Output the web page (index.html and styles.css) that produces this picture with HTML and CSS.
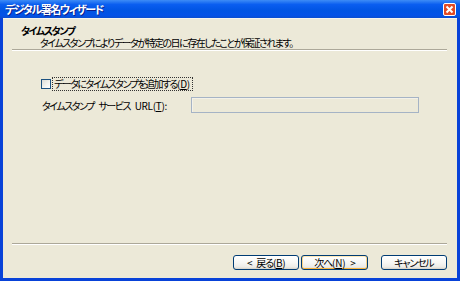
FILE: index.html
```html
<!DOCTYPE html>
<html lang="ja">
<head>
    <meta charset="UTF-8">
    <title>デジタル署名ウィザード</title>
    <link rel="stylesheet" href="styles.css">
</head>
<body>
    <div class="window">
        <div class="titlebar">
            <span class="title">デジタル署名ウィザード</span>
            <span class="close-btn">
                <svg width="9" height="9" viewBox="0 0 9 9">
                    <path d="M1.5 1.5 L7.5 7.5 M7.5 1.5 L1.5 7.5" stroke="#fff" stroke-width="2"/>
                </svg>
            </span>
        </div>

        <div class="client">
            <div class="header">
                <div class="header-title">タイムスタンプ</div>
                <div class="header-desc">タイムスタンプによりデータが特定の日に存在したことが保証されます。</div>
            </div>
            <div class="separator"></div>

            <div class="content">
                <label class="check-row">
                    <span class="checkbox"></span>
                    <span class="check-text">データにタイムスタンプを追加する<span class="latin">(<u>D</u>)</span></span>
                </label>
                <div class="url-row">
                    <span class="url-label">タイムスタンプ サービス <span class="latin">URL(<u>T</u>):</span></span>
                    <span class="textbox"></span>
                </div>
            </div>

            <div class="separator"></div>

            <div class="buttons">
                <button class="btn">&lt; 戻る<span class="latin">(<u>B</u>)</span></button>
                <button class="btn btn-default">次へ<span class="latin">(<u>N</u>)</span> &gt;</button>
                <button class="btn btn-cancel">キャンセル</button>
            </div>
        </div>
    </div>
</body>
</html>
```

FILE: styles.css
```css
* {
    margin: 0;
    padding: 0;
    box-sizing: border-box;
}

body {
    width: 460px;
    height: 281px;
    overflow: hidden;
    font-family: "Noto Sans CJK JP", "Noto Sans", sans-serif;
    font-size: 10px;
    letter-spacing: -1.5px;
    word-spacing: 4px;
    font-feature-settings: "palt";
    color: #000;
}

.latin {
    letter-spacing: -0.3px;
}

.window {
    width: 460px;
    height: 281px;
    display: flex;
    flex-direction: column;
    background: #0842d8;
}

.titlebar {
    height: 18px;
    flex-shrink: 0;
    display: flex;
    align-items: center;
    justify-content: space-between;
    padding: 0 4px 0 5px;
    background: linear-gradient(180deg, #3d8cf6 0%, #0a5ef0 25%, #0054e3 60%, #0352e8 85%, #0a4ed0 100%);
}

.title {
    color: #fff;
    font-weight: bold;
    font-size: 11px;
    letter-spacing: -1.5px;
    text-shadow: 1px 1px 0 #0a1e8a;
}

.close-btn {
    width: 13px;
    height: 13px;
    display: flex;
    align-items: center;
    justify-content: center;
    background: #e24b25;
    border: 1px solid #fff;
    border-radius: 2px;
}

.client {
    flex: 1;
    margin: 0 3px 3px;
    background: #ece9d8;
    display: flex;
    flex-direction: column;
}

.header {
    height: 31px;
    padding: 6px 0 0 18px;
    border-top: 1px solid #f6f4ec;
}

.header-title {
    font-weight: bold;
    line-height: 12px;
}

.header-desc {
    padding-left: 19px;
    line-height: 12px;
}

.separator {
    height: 2px;
    margin: 0 10px 0 9px;
    border-top: 1px solid #aca899;
    border-bottom: 1px solid #fff;
}

.content {
    flex: 1;
    padding: 26px 0 0 38px;
}

.check-row {
    display: flex;
    align-items: center;
    height: 13px;
}

.checkbox {
    width: 10px;
    height: 10px;
    border: 1px solid #1c5180;
    background: linear-gradient(135deg, #dcdbd5 0%, #f4f4f0 60%, #fff 100%);
    margin-right: 2px;
}

.check-text {
    outline: 1px dotted #333;
    padding: 0 2px 0 1px;
    line-height: 12px;
}

.url-row {
    display: flex;
    align-items: center;
    margin-top: 7px;
    height: 16px;
}

.url-label {
    width: 150px;
    flex-shrink: 0;
    white-space: nowrap;
    padding-left: 1px;
}

.textbox {
    width: 228px;
    height: 16px;
    border: 1px solid #a5b3c5;
    box-shadow: inset 1px 1px 0 #f3f1e8;
    background: #ece9d8;
}

.buttons {
    height: 33px;
    display: flex;
    align-items: center;
    padding: 1px 10px 0 230px;
}

.btn {
    width: 67px;
    height: 15px;
    font-family: inherit;
    font-size: 10px;
    letter-spacing: -1.2px;
    word-spacing: 4px;
    font-feature-settings: "palt";
    line-height: 13px;
    border: 1px solid #003c74;
    border-radius: 3px;
    background: linear-gradient(180deg, #fff 0%, #f7f7f4 50%, #ecebe6 85%, #d6d0c5 100%);
    color: #000;
}

.btn + .btn {
    margin-left: 2px;
}

.btn-default {
    box-shadow: inset 0 -1px 0 #f8b33c, inset 1px 0 0 #fcd486, inset -1px 0 0 #fcd486, inset 0 1px 0 #fee9b8;
}

.btn-cancel {
    margin-left: 13px !important;
}
```
